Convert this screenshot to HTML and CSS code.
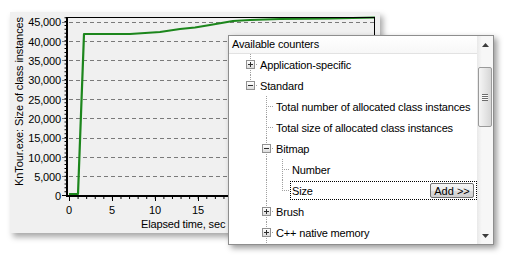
FILE: index.html
```html
<!DOCTYPE html>
<html lang="en">
<head>
  <meta charset="UTF-8">
  <title>Memory counters</title>
  <link rel="stylesheet" href="styles.css">
</head>
<body>
  <div class="stage">
    <div class="chart-panel">
      <svg class="chart" width="370" height="221" viewBox="0 0 370 221">
        <!-- grid -->
        <g class="grid">
          <line x1="52" y1="164.5" x2="365" y2="164.5"/>
          <line x1="52" y1="145.5" x2="365" y2="145.5"/>
          <line x1="52" y1="126.5" x2="365" y2="126.5"/>
          <line x1="52" y1="106.5" x2="365" y2="106.5"/>
          <line x1="52" y1="87.5" x2="365" y2="87.5"/>
          <line x1="52" y1="68.5" x2="365" y2="68.5"/>
          <line x1="52" y1="48.5" x2="365" y2="48.5"/>
          <line x1="52" y1="29.5" x2="365" y2="29.5"/>
          <line x1="52" y1="10.5" x2="365" y2="10.5"/>
        </g>
        <g class="ticks">
          <line class="minor" x1="55.5" y1="184" x2="55.5" y2="5"/>
          <line class="minor-x" x1="59" y1="186" x2="365" y2="186"/>
          <line x1="52" y1="183.5" x2="56" y2="183.5"/>
          <line x1="59.5" y1="185" x2="59.5" y2="189"/>
          <line x1="102.5" y1="185" x2="102.5" y2="189"/>
          <line x1="145.5" y1="185" x2="145.5" y2="189"/>
          <line x1="188.5" y1="185" x2="188.5" y2="189"/>
        </g>
        <polyline class="series" points="59,182 68,182 74,22 120,22 135,21 150,20 170,17 185,15.5 200,13 223,9 240,8 270,7 320,6.5 365,5.5"/>
        <g class="frame">
          <line class="axis" x1="57" y1="5" x2="57" y2="185"/>
          <line class="axis" x1="56" y1="184" x2="366" y2="184"/>
          <line class="edge" x1="57" y1="5.5" x2="365" y2="5.5"/>
          <line class="edge" x1="364.5" y1="5" x2="364.5" y2="184"/>
        </g>
        <g class="ylabels">
          <text x="51" y="14">45,000</text>
          <text x="51" y="33.5">40,000</text>
          <text x="51" y="52.5">35,000</text>
          <text x="51" y="72">30,000</text>
          <text x="51" y="91.5">25,000</text>
          <text x="51" y="110.5">20,000</text>
          <text x="51" y="130">15,000</text>
          <text x="51" y="149.5">10,000</text>
          <text x="51" y="168.5">5,000</text>
          <text x="51" y="188">0</text>
        </g>
        <g class="xlabels">
          <text x="59" y="202">0</text>
          <text x="102" y="202">5</text>
          <text x="145" y="202">10</text>
          <text x="188" y="202">15</text>
          <text x="231" y="202">20</text>
        </g>
        <text class="xtitle" x="131" y="216">Elapsed time, sec</text>
        <text class="ytitle" transform="translate(13,89.5) rotate(-90)">KnTour.exe: Size of class instances</text>
      </svg>
    </div>

    <div class="counters">
      <div class="list">
        <div class="list-head">Available counters</div>
        <div class="tree">
          <div class="row">
            <span class="node tee"><i class="exp plus"></i></span>
            <span class="label">Application-specific</span>
          </div>
          <div class="row">
            <span class="node last"><i class="exp minus"></i></span>
            <span class="label">Standard</span>
          </div>
          <div class="row">
            <span class="cell"></span>
            <span class="node tee"></span>
            <span class="label">Total number of allocated class instances</span>
          </div>
          <div class="row">
            <span class="cell"></span>
            <span class="node tee"></span>
            <span class="label">Total size of allocated class instances</span>
          </div>
          <div class="row">
            <span class="cell"></span>
            <span class="node tee"><i class="exp minus"></i></span>
            <span class="label">Bitmap</span>
          </div>
          <div class="row">
            <span class="cell"></span>
            <span class="cell pipe"></span>
            <span class="node tee"></span>
            <span class="label">Number</span>
          </div>
          <div class="row">
            <span class="cell"></span>
            <span class="cell pipe"></span>
            <span class="node last"></span>
            <span class="label focused">Size <button class="add-btn">Add &gt;&gt;</button></span>
          </div>
          <div class="row">
            <span class="cell"></span>
            <span class="node tee"><i class="exp plus"></i></span>
            <span class="label">Brush</span>
          </div>
          <div class="row">
            <span class="cell"></span>
            <span class="node tee"><i class="exp plus"></i></span>
            <span class="label">C++ native memory</span>
          </div>
        </div>
      </div>
      <div class="scrollbar">
        <div class="sb-btn">
          <svg width="7" height="4" viewBox="0 0 7 4"><path d="M0 4 L3.5 0 L7 4 Z" fill="#3c3c3c"/></svg>
        </div>
        <div class="sb-track">
          <div class="sb-thumb"></div>
        </div>
        <div class="sb-btn">
          <svg width="7" height="4" viewBox="0 0 7 4"><path d="M0 0 L3.5 4 L7 0 Z" fill="#3c3c3c"/></svg>
        </div>
      </div>
    </div>
  </div>
</body>
</html>
```

FILE: styles.css
```css
body {
  margin: 0;
  background: #fff;
  font-family: "Liberation Sans", Arial, sans-serif;
  font-size: 11px;
  color: #000;
}
.stage {
  position: relative;
  width: 495px;
  height: 246px;
  padding: 12px 0 0 10px;
}

/* chart */
.chart-panel {
  width: 370px;
  height: 221px;
  background: #f0f0f0;
  box-shadow: 3px 4px 6px rgba(0,0,0,0.35);
}
.chart {
  display: block;
}
.chart text {
  font-family: "Liberation Sans", Arial, sans-serif;
  font-size: 11px;
  letter-spacing: -0.15px;
  fill: #000;
}
.grid line {
  stroke: #7a7a7a;
  stroke-width: 1;
  stroke-dasharray: 4 3;
}
.ticks line {
  stroke: #000;
  stroke-width: 1;
}
.ticks .minor {
  stroke-width: 2;
  stroke-dasharray: 1 2.866;
}
.ticks .minor-x {
  stroke-width: 2;
  stroke-dasharray: 1 7.58;
}
.series {
  fill: none;
  stroke: #1c861c;
  stroke-width: 2.2;
  stroke-linejoin: round;
}
.frame .axis {
  stroke: #000;
  stroke-width: 2;
}
.frame .edge {
  stroke: #000;
  stroke-width: 1;
}
.ylabels text {
  text-anchor: end;
}
.xlabels text {
  text-anchor: middle;
}
.chart .ytitle {
  text-anchor: middle;
  letter-spacing: -0.1px;
}

/* counters popup */
.counters {
  position: absolute;
  left: 228px;
  top: 35px;
  width: 264px;
  height: 208px;
  border: 1px solid #8e8e8e;
  background: #fff;
  display: flex;
  box-shadow: 3px 3px 6px rgba(0,0,0,0.4);
  letter-spacing: -0.15px;
}
.list {
  flex: 1;
  overflow: hidden;
}
.list-head {
  height: 17px;
  line-height: 17px;
  padding-left: 3px;
  border-bottom: 1px solid #e2e2e2;
  background: linear-gradient(#ffffff, #f7f7f7);
}
.tree {
  padding-left: 13px;
}
.row {
  display: flex;
  height: 21px;
  align-items: stretch;
}
.cell, .node {
  flex: none;
  width: 16px;
  display: flex;
  align-items: center;
}
.pipe {
  background: repeating-linear-gradient(to bottom, #a0a0a0 0 1px, transparent 1px 2px) 8px 0 / 1px 100% no-repeat;
}
.node.tee {
  background:
    repeating-linear-gradient(to right, #a0a0a0 0 1px, transparent 1px 2px) 8px 10px / 8px 1px no-repeat,
    repeating-linear-gradient(to bottom, #a0a0a0 0 1px, transparent 1px 2px) 8px 0 / 1px 100% no-repeat;
}
.node.last {
  background:
    repeating-linear-gradient(to right, #a0a0a0 0 1px, transparent 1px 2px) 8px 10px / 8px 1px no-repeat,
    repeating-linear-gradient(to bottom, #a0a0a0 0 1px, transparent 1px 2px) 8px 0 / 1px 11px no-repeat;
}
.exp {
  width: 7px;
  height: 7px;
  margin-left: 4px;
  border: 1px solid #919191;
  background: linear-gradient(#fff, #dcdcdc);
}
.exp.plus {
  background:
    linear-gradient(#2e2e2e, #2e2e2e) center / 5px 1px no-repeat,
    linear-gradient(#2e2e2e, #2e2e2e) center / 1px 5px no-repeat,
    linear-gradient(#fff, #dcdcdc);
}
.exp.minus {
  background:
    linear-gradient(#2e2e2e, #2e2e2e) center / 5px 1px no-repeat,
    linear-gradient(#fff, #dcdcdc);
}
.label {
  display: flex;
  align-items: center;
  padding: 0 1px;
  margin-left: 1px;
  white-space: nowrap;
}
.label.focused {
  flex: 1;
  margin: 1px 0 1px 0;
  border: 1px dotted #000;
  padding: 0 2px 0 1px;
  justify-content: space-between;
}
.add-btn {
  height: 15px;
  width: 44px;
  padding: 0;
  font-family: "Liberation Sans", Arial, sans-serif;
  font-size: 11px;
  color: #000;
  border: 1px solid #707070;
  border-radius: 2px;
  background: linear-gradient(#f4f4f4 0%, #ebebeb 50%, #dcdcdc 51%, #d0d0d0 100%);
}

/* scrollbar */
.scrollbar {
  width: 16px;
  display: flex;
  flex-direction: column;
  background: linear-gradient(to right, #e9e9e9, #f7f7f7 30%, #f7f7f7);
}
.sb-btn {
  height: 17px;
  display: flex;
  align-items: center;
  justify-content: center;
}
.sb-track {
  flex: 1;
  padding: 14px 1px 0 1px;
}
.sb-thumb {
  height: 58px;
  border: 1px solid #9a9a9a;
  border-radius: 2px;
  background:
    repeating-linear-gradient(to bottom, #6c6c6c 0 1px, #fbfbfb 1px 2px) center / 6px 7px no-repeat,
    linear-gradient(to right, #f5f5f5, #e6e6e6 50%, #d6d6d6);
}
```
